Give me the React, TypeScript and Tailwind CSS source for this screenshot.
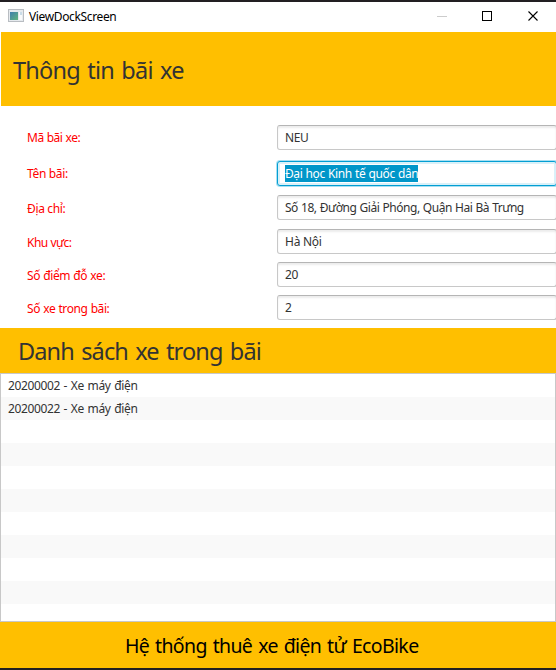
import React from "react";

type Field = { label: string; value: string; row: string; focused?: boolean; labelStyle: string; valueStyle: string };

const fields: Field[] = [
  { label: "Mã bãi xe:", value: "NEU", row: "mt-[19px]", labelStyle: "tracking-[-0.5px] [word-spacing:0.5px]", valueStyle: "tracking-[-0.35px]" },
  { label: "Tên bãi:", value: "Đại học Kinh tế quốc dân", row: "mt-[11px]", focused: true, labelStyle: "tracking-[-0.35px]", valueStyle: "tracking-[-0.4px] [word-spacing:0.5px]" },
  { label: "Địa chỉ:", value: "Số 18, Đường Giải Phóng, Quận Hai Bà Trưng", row: "mt-[9px]", labelStyle: "tracking-[-0.35px] pt-[2px]", valueStyle: "tracking-[-0.47px] [word-spacing:0.5px]" },
  { label: "Khu vực:", value: "Hà Nội", row: "mt-[9px]", labelStyle: "tracking-[-0.5px] pt-[2px]", valueStyle: "tracking-[-0.25px]" },
  { label: "Số điểm đỗ xe:", value: "20", row: "mt-[8px]", labelStyle: "tracking-[-0.41px] [word-spacing:0.5px] pt-[2px]", valueStyle: "tracking-[-0.35px]" },
  { label: "Số xe trong bãi:", value: "2", row: "mt-[8px]", labelStyle: "tracking-[-0.42px] [word-spacing:0.5px] pt-[2px]", valueStyle: "tracking-[-0.35px]" },
];

const bikes = ["20200002 - Xe máy điện", "20200022 - Xe máy điện", "", "", "", "", "", "", "", "", ""];

function TitleBar() {
  return (
    <div className="flex h-[30px] shrink-0 items-center bg-white pl-2">
      <svg className="-mt-[3px]" width="16" height="13" viewBox="0 0 16 13" shapeRendering="crispEdges">
        <defs>
          <linearGradient id="pane" x1="0" y1="0" x2="1" y2="1">
            <stop offset="0" stopColor="#3f7fae" />
            <stop offset="1" stopColor="#62b47c" />
          </linearGradient>
        </defs>
        <rect x="0" y="0" width="16" height="13" fill="#b9bdc2" />
        <rect x="1" y="1" width="14" height="11" fill="#e6eaee" />
        <rect x="2" y="3" width="8" height="8" fill="url(#pane)" />
        <rect x="11" y="3" width="3" height="8" fill="#f9fafb" />
        <rect x="12" y="3" width="2" height="3" fill="#c9dce8" />
      </svg>
      <span className="ml-[5px] text-[12px] leading-[16px] tracking-[-0.36px] text-black">ViewDockScreen</span>
      <svg className="-mt-[2px] ml-auto mr-[17px]" width="102" height="10" viewBox="0 0 102 10" fill="none">
        <path d="M0 5.5H10" stroke="#cccccc" />
        <rect x="45.5" y="0.5" width="9" height="9" stroke="#000" />
        <path d="M91.5 0.5l9 9M100.5 0.5l-9 9" stroke="#000" strokeWidth="1.1" />
      </svg>
    </div>
  );
}

function FormRow({ field }: { field: Field }) {
  const box = field.focused
    ? "border-[#039ed3] shadow-[0_0_0_1px_#a9e0f2,inset_0_0_0_2px_#d9f1f9]"
    : "border-[#c8c8c8] border-t-[#b5b5b5] shadow-[inset_0_2px_2px_#ededed]";
  return (
    <div className={`flex h-[25px] shrink-0 items-center ${field.row}`}>
      <span className={`w-[250px] shrink-0 whitespace-nowrap text-[12px] leading-[16px] text-[#ff0000] ${field.labelStyle}`}>{field.label}</span>
      <div className={`flex h-[25px] w-[280px] shrink-0 items-center rounded-[3px] border bg-white pl-[7px] ${box}`}>
        <span
          className={`whitespace-nowrap text-[12px] leading-[17px] ${field.valueStyle} ${field.focused ? "bg-[#0096c9] text-white" : "text-[#333333]"}`}
        >
          {field.value}
        </span>
      </div>
    </div>
  );
}

export default function App() {
  return (
    <div className="flex h-[670px] w-[556px] flex-col overflow-hidden border-y-2 border-[#221f22] bg-white font-['Noto_Sans',sans-serif]">
      <TitleBar />
      <header className="ml-px flex h-[74px] shrink-0 items-center bg-[#ffbf00] pl-3 pt-[2px]">
        <h1 className="text-[23.5px] leading-[32px] tracking-[-0.77px] [word-spacing:2px] text-[#333333]">Thông tin bãi xe</h1>
      </header>
      <section className="flex h-[222px] shrink-0 flex-col overflow-hidden pl-[27px]">
        {fields.map((f) => (
          <FormRow key={f.label} field={f} />
        ))}
      </section>
      <div className="flex h-[45px] shrink-0 items-center bg-[#ffbf00] pl-[18px]">
        <h2 className="text-[23.5px] leading-[32px] tracking-[-0.86px] [word-spacing:2px] text-[#333333]">Danh sách xe trong bãi</h2>
      </div>
      <ul className="h-[249px] shrink-0 overflow-hidden border border-[#c8c8c8]">
        {bikes.map((b, i) => (
          <li key={i} className="flex h-[23px] items-center pl-[7px] text-[12px] leading-[16px] tracking-[-0.38px] [word-spacing:1px] text-[#333333] even:bg-[#f9f9f9]">
            {b}
          </li>
        ))}
      </ul>
      <footer className="flex h-[46px] shrink-0 items-center bg-[#ffbf00] pl-[125px] pt-[2px]">
        <span className="text-[19.5px] leading-[28px] tracking-[-0.65px] [word-spacing:1.5px] text-black">Hệ thống thuê xe điện tử EcoBike</span>
      </footer>
    </div>
  );
}
